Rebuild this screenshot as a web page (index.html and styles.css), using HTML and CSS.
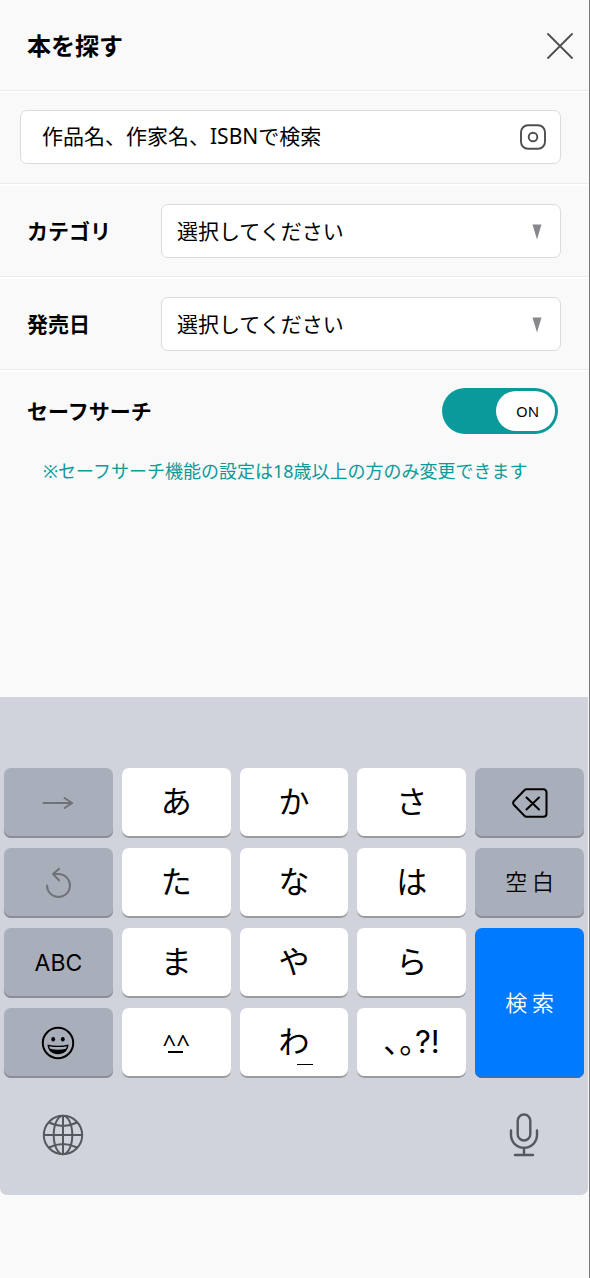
FILE: index.html
```html
<!DOCTYPE html>
<html lang="ja">
<head>
<meta charset="utf-8">
<meta name="viewport" content="width=device-width, initial-scale=1">
<title>本を探す</title>
<link rel="stylesheet" href="styles.css">
</head>
<body>
<main class="screen">
  <header class="header">
    <h1 class="title">本を探す</h1>
    <button class="icon-button" type="button" aria-label="閉じる">
      <svg width="28" height="28" viewBox="0 0 28 28" fill="none" stroke="#4c4f50" stroke-width="1.8" stroke-linecap="round"><path d="M2 2 26 26M26 2 2 26"/></svg>
    </button>
  </header>

  <form class="form">
    <div class="row row-search">
      <div class="search-box">
        <input class="search-input" type="text" aria-label="検索" placeholder="作品名、作家名、ISBNで検索">
        <button class="icon-button" type="button" aria-label="カメラ">
          <svg width="28" height="28" viewBox="0 0 28 28" fill="none" stroke="#4c4f50" stroke-width="1.9"><rect x="2" y="2.200" width="24" height="23.600" rx="7"/><circle cx="14" cy="14" r="4.300"/></svg>
        </button>
      </div>
    </div>

    <div class="row">
      <label class="label" for="category">カテゴリ</label>
      <div class="select-box">
        <select class="select" id="category"><option>選択してください</option></select>
        <svg class="arrow" width="10" height="16" viewBox="0 0 10 16"><path d="M.5.500h9L5 15.500z" fill="#86888b"/></svg>
      </div>
    </div>

    <div class="row">
      <label class="label" for="release">発売日</label>
      <div class="select-box">
        <select class="select" id="release"><option>選択してください</option></select>
        <svg class="arrow" width="10" height="16" viewBox="0 0 10 16"><path d="M.5.500h9L5 15.500z" fill="#86888b"/></svg>
      </div>
    </div>

    <div class="row row-safe">
      <label class="label" for="safe">セーフサーチ</label>
      <label class="toggle">
        <input class="toggle-input" id="safe" type="checkbox" checked>
        <span class="knob">ON</span>
      </label>
    </div>
    <p class="note">※セーフサーチ機能の設定は18歳以上の方のみ変更できます</p>
  </form>

  <section class="keyboard" aria-label="キーボード">
    <div class="keys">
      <button class="key key-gray key-icon" type="button" aria-label="次へ">
        <svg width="32" height="14" viewBox="0 0 32 14" fill="none" stroke="#707276" stroke-width="1.9" stroke-linecap="round" stroke-linejoin="round"><path d="M1.500 7H30M22.500 2 30.200 7l-7.700 5"/></svg>
      </button>
      <button class="key" type="button">あ</button>
      <button class="key" type="button">か</button>
      <button class="key" type="button">さ</button>
      <button class="key key-gray key-icon" type="button" aria-label="削除">
        <svg width="36" height="32" viewBox="0 0 36 32" fill="none" stroke="#000" stroke-width="2" stroke-linecap="round" stroke-linejoin="round"><path d="M14.500 2.300H31.500a3 3 0 0 1 3 3V26.700a3 3 0 0 1-3 3H14.500a3 3 0 0 1-2.100-.9L2 18a3 3 0 0 1 0-4L12.400 3.200a3 3 0 0 1 2.100-.9z"/><path d="M14.500 10.500 27 22.500M27 10.500 14.500 22.500"/></svg>
      </button>

      <button class="key key-gray key-icon" type="button" aria-label="元に戻す">
        <svg width="28" height="32" viewBox="0 0 28 32" fill="none" stroke="#707276" stroke-width="2" stroke-linecap="round" stroke-linejoin="round"><path d="M3 18.500A11.500 11.500 0 1 0 14.500 7H9.500M15.200 1.800 9 7l6.200 6.500"/></svg>
      </button>
      <button class="key" type="button">た</button>
      <button class="key" type="button">な</button>
      <button class="key" type="button">は</button>
      <button class="key key-gray key-word" type="button">空 白</button>

      <button class="key key-gray key-icon key-latin" type="button">ABC</button>
      <button class="key" type="button">ま</button>
      <button class="key" type="button">や</button>
      <button class="key" type="button">ら</button>
      <button class="key key-blue key-word" type="button">検 索</button>

      <button class="key key-gray key-icon" type="button" aria-label="絵文字">
        <svg width="34" height="34" viewBox="0 0 34 34"><circle cx="17" cy="17" r="15.200" fill="none" stroke="#000" stroke-width="2"/><ellipse cx="12.200" cy="13.300" rx="1.900" ry="2.300"/><ellipse cx="21.800" cy="13.300" rx="1.900" ry="2.300"/><path d="M6.500 18.600Q17 21 27.500 18.600C27.300 24.800 22.800 28.200 17 28.200S6.700 24.800 6.500 18.600z"/><path d="M8.200 20.200Q17 22 25.800 20.200q-.3 1.500-1 2.500Q17 24.800 9.200 22.700q-.7-1-1-2.500z" fill="#a8aeba"/></svg>
      </button>
      <button class="key key-face" type="button">^^</button>
      <button class="key key-wa" type="button">わ</button>
      <button class="key key-marks" type="button">､｡?!</button>
    </div>
    <div class="keyboard-bar">
      <button class="icon-button" type="button" aria-label="言語">
        <svg width="42" height="42" viewBox="0 0 42 42" fill="none" stroke="#55585c" stroke-width="2"><circle cx="21" cy="21" r="19.200"/><ellipse cx="21" cy="21" rx="9.300" ry="19.200"/><path d="M21 2v38M2 21h38M7 8.500Q21 15.500 35 8.500M7 33.500Q21 26.500 35 33.500"/></svg>
      </button>
      <button class="icon-button" type="button" aria-label="音声入力">
        <svg width="30" height="44" viewBox="0 0 30 44" fill="none" stroke="#55585c" stroke-width="2.400" stroke-linecap="round"><rect x="8.700" y="1.500" width="12.600" height="26" rx="6.300"/><path d="M2 17.500v4.500a13 12.800 0 0 0 26 0v-4.500M15 35v7M6 42h18"/></svg>
      </button>
    </div>
  </section>
</main>
</body>
</html>
```

FILE: styles.css
```css
* {
  box-sizing: border-box;
}

body {
  margin: 0;
  background: #f9f9f9;
  color: #000;
  font-family: "Noto Sans", "Noto Sans CJK JP", sans-serif;
  font-size: 21px;
  line-height: 30px;
}

button,
input,
select {
  font: inherit;
  color: inherit;
}

.screen {
  display: flex;
  flex-direction: column;
  min-height: 100vh;
  padding-bottom: 83px;
  border-right: 1px solid #77787a;
}

.header {
  display: flex;
  align-items: center;
  justify-content: space-between;
  min-height: 91px;
  padding: 2px 15px 0 27px;
  border-bottom: 1px solid #ececec;
}

.title {
  margin: 0;
  font-size: 24px;
  font-weight: 700;
}

.icon-button {
  display: flex;
  padding: 0;
  border: 0;
  background: none;
}

.row {
  display: flex;
  align-items: center;
  min-height: 93px;
  padding: 0 28px 0 27px;
  border-top: 2px solid #fff;
  border-bottom: 1px solid #ececec;
}

.row-search {
  padding-bottom: 2px;
  padding-left: 20px;
}

.search-box {
  display: flex;
  flex: 1;
  align-items: center;
  height: 54px;
  padding: 0 13px 0 21px;
  border: 1px solid #dcdcdd;
  border-radius: 7px;
  background: #fff;
}

.search-input {
  flex: 1;
  min-width: 0;
  padding: 0 0 2px;
  border: 0;
  outline: 0;
  background: none;
}

.search-input::placeholder {
  color: #000;
  opacity: 1;
}

.label {
  flex: none;
  width: 134px;
  font-weight: 700;
}

.select-box {
  position: relative;
  flex: 1;
}

.select {
  display: block;
  width: 100%;
  height: 54px;
  padding: 0 40px 0 15px;
  border: 1px solid #dcdcdd;
  border-radius: 7px;
  background: #fff;
  appearance: none;
}

.arrow {
  position: absolute;
  top: 20px;
  right: 19px;
  pointer-events: none;
}

.row-safe {
  justify-content: space-between;
  min-height: 80px;
  border-bottom: 0;
}

.toggle {
  display: flex;
  justify-content: flex-end;
  width: 116px;
  margin-right: 3px;
  padding: 3px;
  border-radius: 23px;
  background: #0a9a9c;
}

.toggle-input {
  position: absolute;
  opacity: 0;
}

.knob {
  width: 59px;
  padding-left: 4px;
  border-radius: 20px;
  background: #fff;
  font-size: 15px;
  line-height: 40px;
  text-align: center;
}

.row-safe .label {
  width: auto;
}

.note {
  margin: 6px 20px 0 43px;
  color: #0a9a9c;
  font-size: 18px;
}

.keyboard {
  margin-top: auto;
  margin-right: 1px;
  padding: 71px 4px 38px;
  border-radius: 0 0 7px 7px;
  background: #d0d3db;
}

.keys {
  display: grid;
  grid-template-columns: repeat(5, 1fr);
  grid-auto-rows: 70px;
  gap: 10px 9px;
}

.key {
  position: relative;
  display: flex;
  align-items: center;
  justify-content: center;
  padding: 0 0 6px;
  border: 0;
  border-radius: 7px;
  background: #fff;
  box-shadow: inset 0 -2px #9a9b9e;
  color: #000;
  font-family: "Noto Sans CJK JP", sans-serif;
  font-size: 31px;
}

.key-gray {
  background: #a8aeba;
  box-shadow: inset 0 -2px #8b8e95;
}

.key-icon {
  padding: 0;
}

.key-word {
  font-size: 22px;
  font-weight: 350;
}

.key-latin {
  font-family: Inter, sans-serif;
  font-size: 23px;
}

.key-marks {
  padding-bottom: 2px;
  font-family: Inter, "Noto Sans CJK JP", sans-serif;
}

.key-blue {
  grid-row: span 2;
  padding-bottom: 4px;
  background: #007aff;
  box-shadow: inset 0 -2px #2a72c4;
  color: #fff;
}

.key-face {
  padding-bottom: 0;
  font-family: "Noto Sans", sans-serif;
  font-size: 24px;
}

.key-face::after,
.key-wa::after {
  position: absolute;
  top: 43px;
  left: 46px;
  width: 15px;
  height: 2px;
  background: #000;
  content: "";
}

.key-wa::after {
  top: 56px;
  left: 57px;
  width: 16px;
  height: 1px;
}

.keyboard-bar {
  display: flex;
  align-items: center;
  justify-content: space-between;
  padding: 35px 45px 0 38px;
}
```
